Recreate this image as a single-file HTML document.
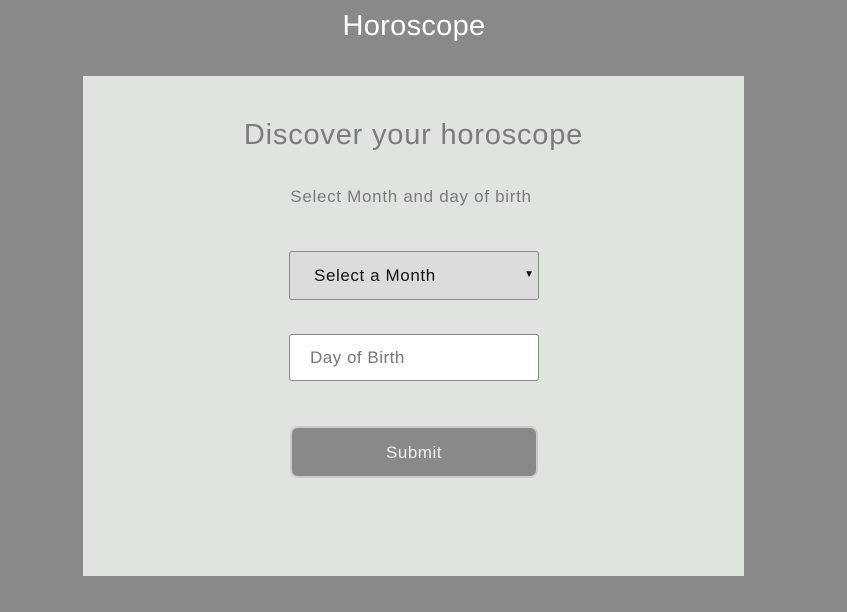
<!DOCTYPE html>
<html><head><style>
html,body{margin:0;padding:0}
body{width:847px;height:612px;background:#878a86;position:relative;font-family:"Liberation Sans","DejaVu Sans",sans-serif;overflow:hidden}
.t{position:absolute;left:0;width:828px;text-align:center;top:9px;color:#fff;font-size:29px;line-height:34px;letter-spacing:0.3px}
.card{position:absolute;left:83px;top:76px;width:661px;height:500px;background:#dfe5de}
.h{position:absolute;left:0;width:661px;text-align:center;top:42px;color:#7a7c7a;font-size:29px;line-height:34px;letter-spacing:0.8px}
.s{position:absolute;left:0;width:656px;text-align:center;top:111px;color:#7a7c7a;font-size:17px;line-height:20px;letter-spacing:0.7px}
.sel{position:absolute;left:206px;top:175px;width:248px;height:47px;background:#dcdcdc;border:1px solid #8a8a8a;border-radius:3px}
.sel span{position:absolute;left:24px;top:14px;font-size:17px;color:#111;letter-spacing:0.6px}
.sel i{position:absolute;right:4px;top:17px;font-style:normal;font-size:10px;color:#111}
.in{position:absolute;left:206px;top:258px;width:248px;height:45px;background:#fff;border:1px solid #8a8a8a;border-radius:3px}
.in span{position:absolute;left:20px;top:13px;font-size:17px;color:#777;letter-spacing:0.5px}
.btn{position:absolute;left:207px;top:350px;width:244px;height:48px;background:#878a86;border:2px solid #c9ccc8;border-radius:8px;color:#eee;font-size:17px;text-align:center;line-height:49px;letter-spacing:0.5px}
</style></head><body>
<div class="t">Horoscope</div>
<div class="card">
<div class="h">Discover your horoscope</div>
<div class="s">Select Month and day of birth</div>
<div class="sel"><span>Select a Month</span><i>▼</i></div>
<div class="in"><span>Day of Birth</span></div>
<div class="btn">Submit</div>
</div>
</body></html>
